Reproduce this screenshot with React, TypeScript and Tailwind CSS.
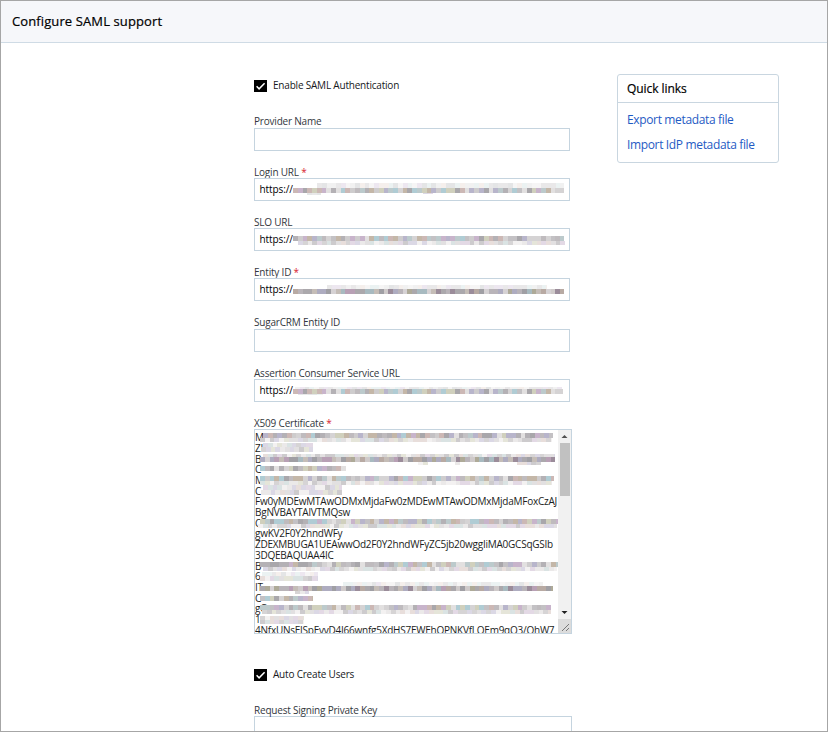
import type { ReactNode } from "react";

type Tone = "dark" | "mid" | "light" | "faint";
type Strip = { x: number; y: number; w: number; h: number; tone: Tone };

const PALETTE: Record<Tone, string[]> = {
  dark: ["#aba8ac", "#b9b4b9", "#a09fa4", "#cfcaca", "#b8aaa3", "#a8bac0", "#b8a0b5", "#d6d2d4", "#aeaa98", "#aeacc0", "#9b8c9a", "#c5bdb7"],
  mid: ["#c3c1c4", "#b4b1b5", "#d5d3d4", "#bccaCC", "#ccb8b5", "#b8b5cb", "#d0d0bd", "#c8b4cb", "#a9a7ab", "#e2e0e0", "#b0ccd4", "#c4b7a8", "#cecccd", "#bfbbbe"],
  light: ["#e2e0e1", "#d6d4d5", "#ebe9e9", "#dae3e3", "#e8dedb", "#dbd8e5", "#e5e5d9", "#f3f1f1", "#cdcbcd", "#e3d9e5"],
  faint: ["#f1f1f1", "#e9e8e9", "#f6f5f5", "#e4e5e6", "#f5efec", "#ebf2f2", "#ede7f0"],
};

const CELL = 4.77;

/** Pixelated strips that cover the private part of a value. */
function Mosaic({ strips, width, height }: { strips: Strip[]; width: number; height: number }) {
  return (
    <svg className="pointer-events-none absolute left-0 top-0" width={width} height={height} shapeRendering="crispEdges" aria-hidden="true">
      {strips.map((s, i) => {
        const shades = PALETTE[s.tone];
        const count = Math.ceil(s.w / CELL);
        return Array.from({ length: count }, (_, c) => {
          const n = Math.abs(Math.sin((c + 1) * 12.9898 + (s.y + i * 7) * 78.233) * 43758.5453);
          const shade = shades[Math.floor((n - Math.floor(n)) * shades.length)];
          const w = Math.min(CELL, s.w - c * CELL);
          return <rect key={`${i}-${c}`} x={s.x + c * CELL} y={s.y} width={w} height={s.h} fill={shade} />;
        });
      })}
    </svg>
  );
}

function Label({ children, required }: { children: ReactNode; required?: boolean }) {
  return (
    <label className="block h-[14px] whitespace-nowrap pt-[0.8px] text-[10px] leading-[14px] tracking-[-0.2px] text-[#33373d]">
      {children}
      {required && <span className="text-[#d8232f]"> *</span>}
    </label>
  );
}

function Field({ label, required, value, strips }: { label: string; required?: boolean; value?: string; strips?: Strip[] }) {
  return (
    <div className="h-[50.25px]">
      <Label required={required}>{label}</Label>
      <div className="relative h-[23px] w-[316px] border border-[#c5d4df] bg-white pl-[4.5px] text-[10px] leading-[21px] tracking-[-0.1px] text-black">
        {value}
        {strips && <Mosaic strips={strips} width={314} height={21} />}
      </div>
    </div>
  );
}

function Check({ children }: { children: ReactNode }) {
  return (
    <div className="flex h-[13px] items-center text-[10px] leading-[13px] tracking-[-0.2px] text-[#16181c]">
      <svg width="13" height="12" viewBox="0 0 13 12" className="mr-1.5">
        <rect width="13" height="12" fill="#000" />
        <path d="M2.6 6.2 5.1 8.8 10.6 3.2" fill="none" stroke="#fff" strokeWidth="1.5" />
      </svg>
      <span className="whitespace-nowrap">{children}</span>
    </div>
  );
}

const LOGIN: Strip[] = [
  { x: 62, y: 4, w: 247, h: 5, tone: "faint" },
  { x: 38, y: 9, w: 271, h: 5, tone: "mid" },
  { x: 52, y: 14, w: 14, h: 2, tone: "faint" },
  { x: 168, y: 14, w: 10, h: 1, tone: "light" },
];
const SLO: Strip[] = [
  { x: 38, y: 7, w: 271, h: 5, tone: "mid" },
  { x: 43, y: 12, w: 267, h: 4, tone: "light" },
];
const ENTITY: Strip[] = [
  { x: 72, y: 6, w: 220, h: 4, tone: "faint" },
  { x: 38, y: 10, w: 271, h: 5, tone: "dark" },
];
const ACS: Strip[] = [
  { x: 40, y: 7, w: 267, h: 2, tone: "faint" },
  { x: 38, y: 9, w: 270, h: 5, tone: "mid" },
  { x: 43, y: 14, w: 25, h: 1, tone: "faint" },
];

const CERT_LINES = [
  "M", "ZI", "B", "C", "M", "C",
  "Fw0yMDEwMTAwODMxMjdaFw0zMDEwMTAwODMxMjdaMFoxCzAJ",
  "BgNVBAYTAlVTMQsw",
  "C",
  "gwKV2F0Y2hndWFy",
  "ZDEXMBUGA1UEAwwOd2F0Y2hndWFyZC5jb20wggIiMA0GCSqGSIb",
  "3DQEBAQUAA4IC",
  "B", "6", "IT", "C", "gO", "1",
  "4NfxUNsEJSpEvyD4I66wnfg5XdHS7EWEhOPNKVfLOEm9qO3/QhW7",
];

const CERT: Strip[] = [
  { x: 8, y: 3, w: 290, h: 5, tone: "mid" },
  { x: 5, y: 8, w: 292, h: 4, tone: "light" },
  { x: 8, y: 13, w: 50, h: 4, tone: "light" },
  { x: 6, y: 17, w: 52, h: 5, tone: "light" },
  { x: 8, y: 24, w: 292, h: 3, tone: "light" },
  { x: 5, y: 27, w: 295, h: 5, tone: "dark" },
  { x: 163, y: 32, w: 10, h: 3, tone: "light" },
  { x: 200, y: 32, w: 5, h: 3, tone: "light" },
  { x: 262, y: 32, w: 24, h: 3, tone: "light" },
  { x: 5, y: 36, w: 86, h: 5, tone: "mid" },
  { x: 5, y: 46, w: 294, h: 5, tone: "mid" },
  { x: 5, y: 51, w: 292, h: 4, tone: "light" },
  { x: 8, y: 55, w: 79, h: 5, tone: "light" },
  { x: 6, y: 60, w: 81, h: 5, tone: "light" },
  { x: 5, y: 89, w: 298, h: 5, tone: "mid" },
  { x: 3, y: 94, w: 299, h: 4, tone: "light" },
  { x: 5, y: 132, w: 298, h: 5, tone: "mid" },
  { x: 8, y: 137, w: 294, h: 4, tone: "light" },
  { x: 7, y: 142, w: 56, h: 4, tone: "faint" },
  { x: 5, y: 146, w: 58, h: 5, tone: "light" },
  { x: 88, y: 152, w: 200, h: 4, tone: "faint" },
  { x: 5, y: 156, w: 293, h: 5, tone: "dark" },
  { x: 40, y: 161, w: 14, h: 3, tone: "light" },
  { x: 5, y: 166, w: 53, h: 5, tone: "mid" },
  { x: 5, y: 175, w: 291, h: 5, tone: "mid" },
  { x: 7, y: 180, w: 289, h: 4, tone: "light" },
  { x: 5, y: 186, w: 44, h: 4, tone: "light" },
  { x: 5, y: 190, w: 44, h: 4, tone: "light" },
];

function Certificate() {
  return (
    <div className="flex h-[205px] w-[318px] border border-[#c5d4df] bg-white">
      <div className="relative h-[203px] w-[303px] overflow-hidden pt-[2px] text-[10px] leading-[10.7px] tracking-[-0.24px] text-[#1b1d21]">
        {CERT_LINES.map((line, i) => (
          <div key={i} className="whitespace-nowrap">{line}</div>
        ))}
        <Mosaic strips={CERT} width={303} height={203} />
      </div>
      <div className="flex w-[13px] flex-col items-center bg-[#f1f1f1]">
        <svg width="13" height="13" viewBox="0 0 13 13"><path d="M3.5 8 6.5 5 9.5 8Z" fill="#505050" /></svg>
        <div className="h-[53px] w-[10px] bg-[#c1c1c1]" />
        <div className="flex-1" />
        <svg width="13" height="13" viewBox="0 0 13 13"><path d="M3.5 5 6.5 8 9.5 5Z" fill="#202020" /></svg>
        <svg width="13" height="14" viewBox="0 0 13 14">
          <rect width="13" height="14" fill="#dcdcdc" />
          <path d="M4 12 11 5M8 12 11 9" stroke="#777" strokeWidth="1" />
        </svg>
      </div>
    </div>
  );
}

export default function App() {
  return (
    <div className="flex h-[732px] w-[828px] flex-col overflow-hidden border border-[#a6a6a6] bg-white font-['Open_Sans',sans-serif]">
      <header className="h-[42px] shrink-0 border-b border-[#cfdbe5] bg-[#f6f7fa] pl-[11px] text-[13px] leading-[40px] tracking-[0.11px] text-black [-webkit-text-stroke:0.2px_black]">
        Configure SAML support
      </header>
      <main className="flex min-h-0 flex-1 items-start pl-[253px]">
        <form className="w-[318px] pt-[36px]">
          <Check>Enable SAML Authentication</Check>
          <div className="h-[21.6px]" />
          <Field label="Provider Name" />
          <Field label="Login URL" required value="https://" strips={LOGIN} />
          <Field label="SLO URL" value="https://" strips={SLO} />
          <Field label="Entity ID" required value="https://" strips={ENTITY} />
          <Field label="SugarCRM Entity ID" />
          <Field label="Assertion Consumer Service URL" value="https://" strips={ACS} />
          <Label required>X509 Certificate</Label>
          <Certificate />
          <div className="h-[34px]" />
          <Check>Auto Create Users</Check>
          <div className="h-[21px]" />
          <Label>Request Signing Private Key</Label>
          <div className="h-10 w-[318px] border border-[#c5d4df]" />
        </form>
        <aside className="ml-[45px] mt-[31px] h-[89px] w-[162px] rounded-[3px] border border-[#c9d6e0]">
          <h2 className="h-[28px] border-b border-[#c9d6e0] pl-[9px] text-[12px] leading-[28px] tracking-[-0.05px] text-black [-webkit-text-stroke:0.2px_black]">Quick links</h2>
          <ul className="pl-[9px] pt-1 text-[12px] leading-[25px] tracking-[-0.35px] text-[#1f5bc4]">
            <li><a>Export metadata file</a></li>
            <li><a>Import IdP metadata file</a></li>
          </ul>
        </aside>
      </main>
    </div>
  );
}
